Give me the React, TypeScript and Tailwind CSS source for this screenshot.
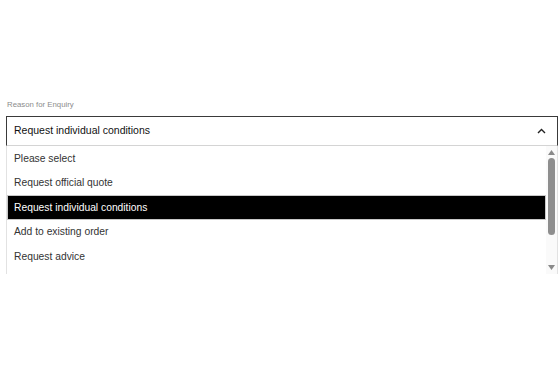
export default function App() {
    const options = [
        "Please select",
        "Request official quote",
        "Request individual conditions",
        "Add to existing order",
        "Request advice",
    ];
    const selected = 2;

    return (
        <div className="w-[560px] h-[373px] bg-white pt-[100px] px-[6px] font-['Liberation_Sans',Arial,sans-serif]">
            {/* label */}
            <div className="text-[7.8px] leading-[10px] text-[#8c8c8c] pl-px">
                Reason for Enquiry
            </div>

            {/* select trigger */}
            <div className="mt-[6px] h-[30px] w-[552px] flex items-center justify-between 
                            border border-[#3a3a3a] border-b-[#d4d4d4] pl-[7px] pr-[10px]">
                <span className="text-[10.5px] text-[#111]">{options[selected]}</span>
                <svg width="9" height="6" viewBox="0 0 9 6" className="mr-px">
                    <path d="M1 5 L4.5 1.5 L8 5" fill="none" stroke="#222" strokeWidth="1.4" />
                </svg>
            </div>

            {/* dropdown list */}
            <div className="w-[552px] h-[128px] flex border-x border-[#e2e2e2]">
                <div className="flex-1 flex flex-col">
                    {options.map((o, i) => (
                        <div
                            key={o}
                            className={
                                i === selected
                                    ? "h-[24.6px] flex items-center pl-[6px] text-[10.3px] bg-black text-white border border-[#c8c8c8]"
                                    : "h-[24.6px] flex items-center pl-[6px] text-[10.3px] text-[#333] border border-transparent"
                            }
                        >
                            {o}
                        </div>
                    ))}
                </div>

                {/* scrollbar */}
                <div className="w-[11px] flex flex-col items-center bg-[#fafafa]">
                    <svg width="7" height="5" viewBox="0 0 7 5" className="mt-[4px]">
                        <path d="M0 5 L3.5 0 L7 5 Z" fill="#8a8a8a" />
                    </svg>
                    <div className="mt-[3px] w-[7px] h-[77px] rounded-full bg-[#8e8e8e]" />
                    <div className="flex-1" />
                    <svg width="7" height="5" viewBox="0 0 7 5" className="mb-[4px]">
                        <path d="M0 0 L3.5 5 L7 0 Z" fill="#8a8a8a" />
                    </svg>
                </div>
            </div>
        </div>
    );
}
